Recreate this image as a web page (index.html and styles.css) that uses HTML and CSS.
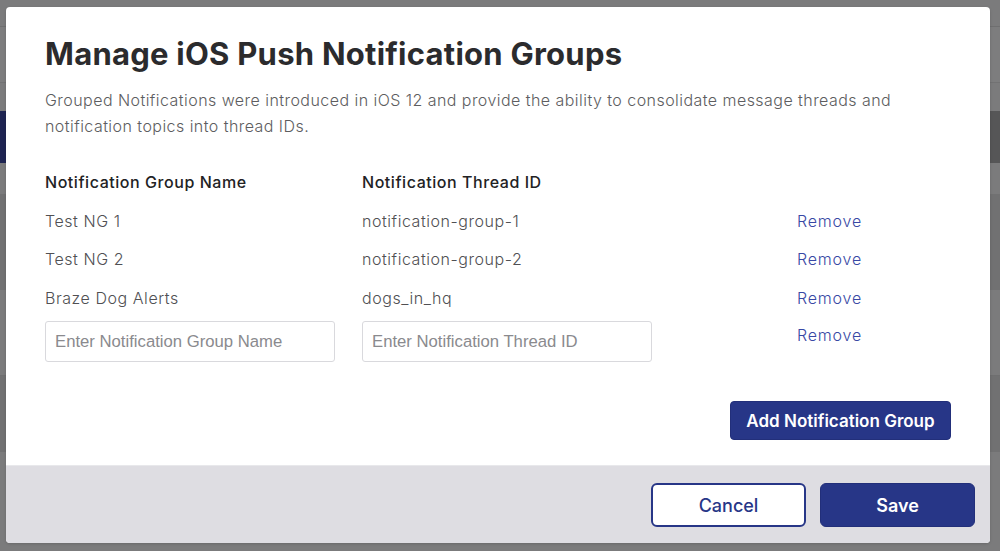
FILE: index.html
```html
<!DOCTYPE html>
<html lang="en">
<head>
<meta charset="utf-8">
<title>Manage iOS Push Notification Groups</title>
<link rel="stylesheet" href="styles.css">
</head>
<body>
<div class="backdrop">
  <div class="bg-band thin"></div>
  <div class="bg-band line"></div>
  <div class="bg-band gap1"></div>
  <div class="bg-band hero"><span class="hero-left"></span><span class="hero-right"></span></div>
  <div class="bg-band gap2"></div>
  <div class="bg-band dark1"></div>
  <div class="bg-band gap3"></div>
  <div class="bg-band dark2"></div>
  <div class="bg-band rest"></div>
</div>

<div class="modal" role="dialog" aria-labelledby="modal-title">
  <div class="modal-body">
    <h1 id="modal-title" class="modal-title">Manage iOS Push Notification Groups</h1>
    <p class="modal-desc">Grouped Notifications were introduced in iOS 12 and provide the ability to consolidate message threads and notification topics into thread IDs.</p>

    <div class="groups">
      <div class="row head">
        <div class="cell">Notification Group Name</div>
        <div class="cell">Notification Thread ID</div>
        <div class="cell"></div>
      </div>
      <div class="row">
        <div class="cell">Test NG 1</div>
        <div class="cell">notification-group-1</div>
        <div class="cell"><a class="remove" href="#">Remove</a></div>
      </div>
      <div class="row">
        <div class="cell">Test NG 2</div>
        <div class="cell">notification-group-2</div>
        <div class="cell"><a class="remove" href="#">Remove</a></div>
      </div>
      <div class="row">
        <div class="cell">Braze Dog Alerts</div>
        <div class="cell">dogs_in_hq</div>
        <div class="cell"><a class="remove" href="#">Remove</a></div>
      </div>
      <div class="row input-row">
        <div class="cell"><input class="field" type="text" placeholder="Enter Notification Group Name"></div>
        <div class="cell"><input class="field" type="text" placeholder="Enter Notification Thread ID"></div>
        <div class="cell"><a class="remove" href="#">Remove</a></div>
      </div>
    </div>

    <div class="add-wrap">
      <button class="btn btn-primary btn-add" type="button">Add Notification Group</button>
    </div>
  </div>
  <div class="modal-footer">
    <button class="btn btn-outline btn-foot" type="button">Cancel</button>
    <button class="btn btn-primary btn-foot" type="button">Save</button>
  </div>
</div>
</body>
</html>
```

FILE: styles.css
```css
* { box-sizing: border-box; }

html, body {
  margin: 0;
  padding: 0;
  width: 1000px;
  height: 551px;
  overflow: hidden;
}

body {
  position: relative;
  background: #7b7b7c;
  font-family: "Inter", "Liberation Sans", sans-serif;
}

/* dimmed page behind the modal */
.backdrop {
  display: flex;
  flex-direction: column;
  height: 551px;
}
.bg-band { flex: none; }
.bg-band.thin { height: 27px; background: #7b7b7c; border-bottom: 1px solid #6f6f70; }
.bg-band.line { height: 56px; background: #7d7d7e; border-bottom: 1px solid #727273; }
.bg-band.gap1 { height: 28px; background: #7b7b7c; }
.bg-band.hero {
  height: 52px;
  display: flex;
  justify-content: space-between;
  background: #7b7b7c;
}
.hero-left { width: 12px; background: #1e2452; }
.hero-right { width: 20px; background: #565657; }
.bg-band.gap2 { height: 31px; background: #7b7b7c; }
.bg-band.dark1 { height: 96px; background: #717172; }
.bg-band.gap3 { height: 86px; background: #7b7b7c; border-bottom: 1px solid #6f6f70; }
.bg-band.dark2 { height: 76px; background: #717172; }
.bg-band.rest { flex: 1; background: #7b7b7c; }

/* modal */
.modal {
  position: absolute;
  left: 6px;
  top: 7px;
  width: 984px;
  height: 536px;
  background: #fff;
  border-radius: 4px;
  overflow: hidden;
  display: flex;
  flex-direction: column;
  box-shadow: 0 1px 3px rgba(0,0,0,0.15);
}

.modal-body {
  flex: 1;
  padding: 28px 39px 0 39px;
}

.modal-title {
  margin: 0;
  font-weight: 700;
  font-size: 31px;
  line-height: 38px;
  color: #2b2b2d;
  letter-spacing: 0.25px;
}

.modal-desc {
  margin: 14px 0 0 0;
  font-size: 16px;
  line-height: 26px;
  color: #5d5d60;
  font-weight: 300;
  letter-spacing: 0.45px;
  max-width: 880px;
}

.groups {
  margin-top: 24px;
  display: flex;
  flex-direction: column;
}

.row {
  display: grid;
  grid-template-columns: 317px 435px 1fr;
  align-items: center;
  height: 38.5px;
  font-size: 16px;
  font-weight: 300;
  color: #505053;
  letter-spacing: 0.55px;
}

.row.head {
  color: #222224;
  font-weight: 500;
  letter-spacing: 0.55px;
}

.row.input-row {
  height: 41px;
  align-items: start;
  margin-top: 4px;
}
.row.input-row .remove { display: inline-block; margin-top: 4px; }

.remove {
  color: #3848a4;
  text-decoration: none;
  font-size: 16px;
  font-weight: 300;
  letter-spacing: 0.8px;
}

.field {
  width: 290px;
  height: 41px;
  border: 1px solid #d9d9dd;
  border-radius: 3px;
  padding: 0 9px;
  font-family: "Liberation Sans", Arial, sans-serif;
  font-size: 16.7px;
  letter-spacing: 0;
  color: #333;
  background: #fff;
  outline: none;
}
.field::placeholder { color: #8a8a8e; }

.add-wrap {
  display: flex;
  justify-content: flex-end;
  margin-top: 39px;
}

.btn {
  font-family: "Inter", "Liberation Sans", sans-serif;
  font-size: 17px;
  font-weight: 600;
  border-radius: 4px;
  cursor: pointer;
}

.btn-primary {
  background: #273687;
  color: #fff;
  border: 1px solid #222f7a;
}

.btn-outline {
  background: #fff;
  color: #273687;
  border: 2px solid #273687;
  font-weight: 500;
}

.btn-add {
  width: 221px;
  height: 39px;
  padding: 0;
}

.modal-footer {
  flex: none;
  height: 78px;
  background: #deddE2;
  border-top: 1px solid #e8e8eb;
  display: flex;
  justify-content: flex-end;
  align-items: flex-start;
  gap: 14px;
  padding: 17px 15px 0 0;
}

.btn-foot {
  width: 155px;
  height: 44px;
  border-radius: 6px;
  font-size: 18px;
}
```
